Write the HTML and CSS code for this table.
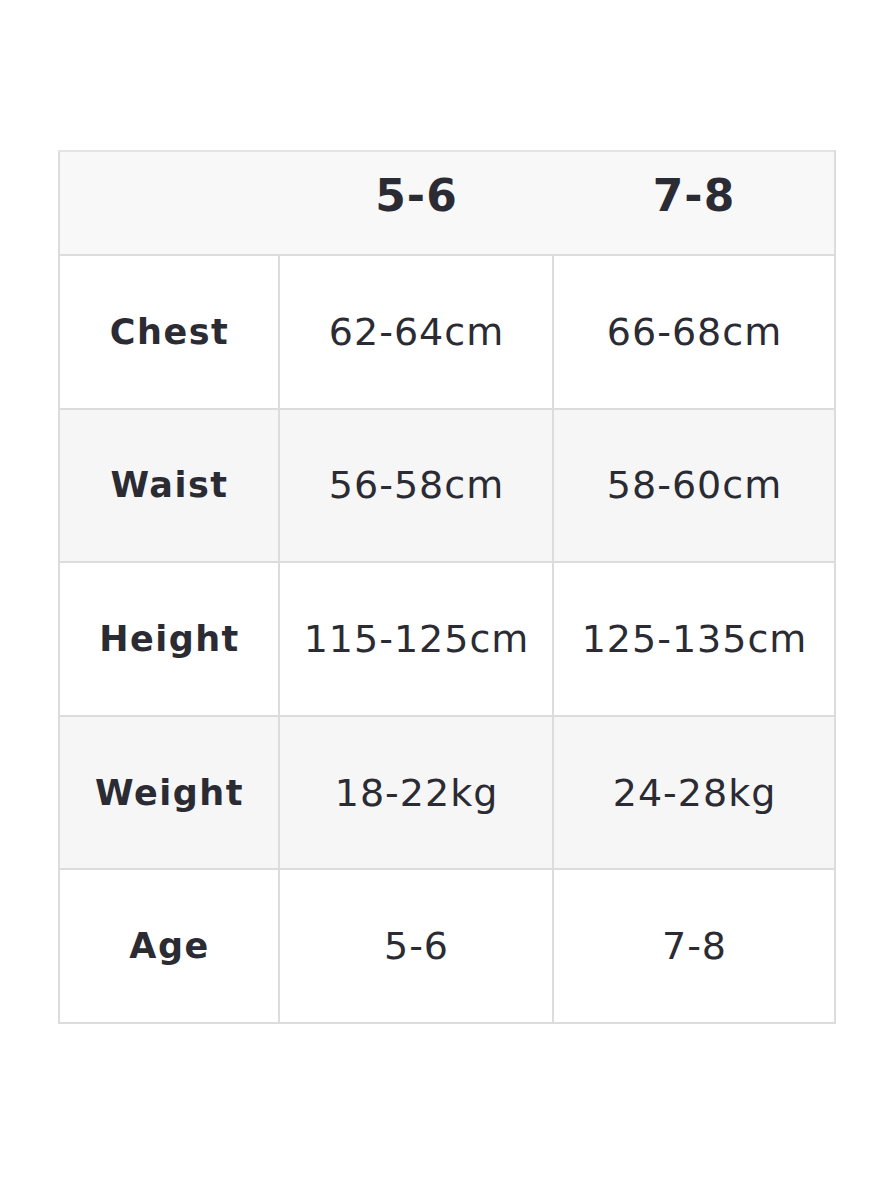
FILE: index.html
```html
<!DOCTYPE html>
<html>
<head>
<meta charset="utf-8">
<link rel="stylesheet" href="styles.css">
</head>
<body>
<div class="page">
  <table class="size-table">
    <thead>
      <tr class="head">
        <th class="c1"></th>
        <th class="c2">5-6</th>
        <th class="c3">7-8</th>
      </tr>
    </thead>
    <tbody>
      <tr><th>Chest</th><td>62-64cm</td><td>66-68cm</td></tr>
      <tr class="alt"><th>Waist</th><td>56-58cm</td><td>58-60cm</td></tr>
      <tr><th>Height</th><td>115-125cm</td><td>125-135cm</td></tr>
      <tr class="alt"><th>Weight</th><td>18-22kg</td><td>24-28kg</td></tr>
      <tr><th>Age</th><td>5-6</td><td>7-8</td></tr>
    </tbody>
  </table>
</div>
</body>
</html>
```

FILE: styles.css
```css
html, body {
  margin: 0;
  padding: 0;
  background: #ffffff;
}
.page {
  padding: 150px 0 0 58px;
  font-family: "DejaVu Sans", "Liberation Sans", sans-serif;
  color: #2b2b33;
}
.size-table {
  border-collapse: collapse;
  width: 771px;
  table-layout: fixed;
}
.size-table .c1 { width: 218px; }
.size-table .c2 { width: 273px; }
.size-table .c3 { width: 280px; }
.head th {
  height: 86px;
  padding: 0 0 16px 1px;
  background: #f8f8f8;
  border-top: 2px solid #e4e4e4;
  border-bottom: 2px solid #dcdcdc;
  font-size: 44px;
  font-weight: 700;
  letter-spacing: 1px;
  text-align: center;
}
.head th.c1 { border-left: 2px solid #dcdcdc; }
.head th.c3 { border-right: 2px solid #dcdcdc; }
tbody th, tbody td {
  height: 151.6px;
  padding: 0;
  border: 2px solid #dcdcdc;
  text-align: center;
}
tbody th {
  font-weight: 700;
  font-size: 35px;
  letter-spacing: 1.5px;
  padding-left: 1px;
}
tbody td {
  font-weight: 400;
  font-size: 38px;
  letter-spacing: 1px;
  padding-left: 1px;
}
tr.alt th, tr.alt td { background: #f6f6f6; }
```
